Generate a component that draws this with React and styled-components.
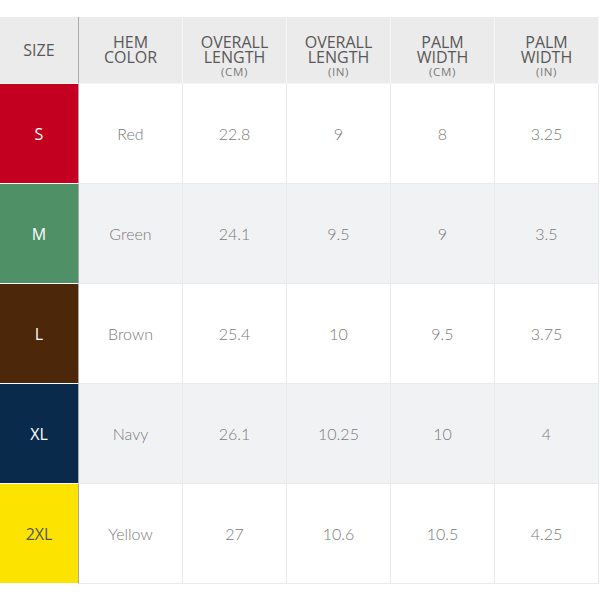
import React from "react";
import styled, { createGlobalStyle } from "styled-components";

const GlobalStyle = createGlobalStyle`
  html, body {
    margin: 0;
    padding: 0;
    background: #ffffff;
  }
  body {
    font-family: Lato, "Liberation Sans", sans-serif;
  }
`;

const Page = styled.div`
  width: 600px;
  height: 600px;
  padding-top: 17px;
  box-sizing: border-box;
`;

const Table = styled.div`
  display: grid;
  grid-template-columns: 79px repeat(5, 104px);
  grid-template-rows: 67px repeat(5, 100px);
`;

const HeadCell = styled.div`
  background: #ebebeb;
  border-right: 1px solid ${(p) => (p.$first ? "#a9a9a9" : "#f7f7f7")};
  border-bottom: 1px solid #f5f5f5;
  display: flex;
  flex-direction: column;
  align-items: center;
  justify-content: center;
  text-align: center;
  color: #585858;
  font-family: "Open Sans", "DejaVu Sans", sans-serif;
  font-size: 16px;
  line-height: 15px;
  text-transform: uppercase;
`;

const Line = styled.span`
  display: block;
  height: 15px;
`;

const Unit = styled.span`
  display: block;
  font-size: 11.5px;
  letter-spacing: 0.6px;
  line-height: 13px;
  margin-bottom: -13px;
  color: #7a7a7a;
`;

const SizeCell = styled.div`
  background: ${(p) => p.$bg};
  color: ${(p) => p.$fg};
  border-right: 1px solid #a9a9a9;
  border-bottom: 1px solid #ffffff;
  display: flex;
  align-items: center;
  justify-content: center;
  font-family: "Open Sans", sans-serif;
  font-size: 16px;
`;

const Cell = styled.div`
  background: ${(p) => (p.$alt ? "#f1f2f4" : "#ffffff")};
  border-right: 1px solid #e9eaec;
  border-bottom: 1px solid #e9eaec;
  display: flex;
  align-items: center;
  justify-content: center;
  color: #7a7a7a;
  font-size: 16px;
  font-weight: 300;
`;

const headers = [
  ["Size"],
  ["Hem", "Color"],
  ["Overall", "Length", "(cm)"],
  ["Overall", "Length", "(in)"],
  ["Palm", "Width", "(cm)"],
  ["Palm", "Width", "(in)"],
];

const rows = [
  { size: "S", bg: "#c30020", fg: "#ffffff", cells: ["Red", "22.8", "9", "8", "3.25"] },
  { size: "M", bg: "#4f9067", fg: "#ffffff", cells: ["Green", "24.1", "9.5", "9", "3.5"] },
  { size: "L", bg: "#4d2709", fg: "#ffffff", cells: ["Brown", "25.4", "10", "9.5", "3.75"] },
  { size: "XL", bg: "#0a2a4b", fg: "#ffffff", cells: ["Navy", "26.1", "10.25", "10", "4"] },
  { size: "2XL", bg: "#fde400", fg: "#555555", cells: ["Yellow", "27", "10.6", "10.5", "4.25"] },
];

export default function App() {
  return (
    <Page>
      <GlobalStyle />
      <Table>
        {headers.map((h, i) => (
          <HeadCell key={i} $first={i === 0}>
            <Line>{h[0]}</Line>
            {h[1] && <Line>{h[1]}</Line>}
            {h[2] && <Unit>{h[2]}</Unit>}
          </HeadCell>
        ))}
        {rows.map((r, ri) => (
          <React.Fragment key={r.size}>
            <SizeCell $bg={r.bg} $fg={r.fg}>{r.size}</SizeCell>
            {r.cells.map((c, ci) => (
              <Cell key={ci} $alt={ri % 2 === 1}>{c}</Cell>
            ))}
          </React.Fragment>
        ))}
      </Table>
    </Page>
  );
}
